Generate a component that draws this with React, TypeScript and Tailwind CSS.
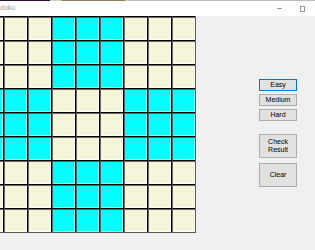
const ROWS = [0, 1, 2, 3, 4, 5, 6, 7, 8];

function Cell({ cyan }: { cyan: boolean }) {
  return (
    <div
      className={
        "h-6 w-6 border-l border-t border-black " +
        (cyan
          ? "bg-[#00ffff] shadow-[inset_1px_1px_0_#4a6a6a,inset_-1px_-1px_0_#7fffff]"
          : "bg-[#f5f5dc] shadow-[inset_1px_1px_0_#6b6b60,inset_-1px_-1px_0_#fdfdf3]")
      }
    />
  );
}

function WinButton({ label, tall, active }: { label: React.ReactNode; tall?: boolean; active?: boolean }) {
  return (
    <button
      className={
        "flex w-[38px] items-center justify-center bg-[#e1e1e1] text-center text-[7px] leading-[8px] text-black " +
        (tall ? "h-6 " : "h-3 ") +
        (active ? "border border-[#0078d7]" : "border border-[#adadad]")
      }
    >
      {label}
    </button>
  );
}

export default function App() {
  return (
    <div className="flex h-[250px] w-[315px] flex-col overflow-hidden bg-[#f0f0f0] font-['Liberation_Sans',Arial,sans-serif]">
      {/* desktop strip behind the window */}
      <div className="flex h-px">
        <div className="w-[50px] bg-[#2e0f30]" />
        <div className="w-[12px] bg-[#d8d0c0]" />
        <div className="w-[63px] bg-[#8c7a60]" />
        <div className="flex-1 bg-[#bdbdbd]" />
      </div>

      {/* title bar */}
      <div className="flex h-[15px] items-center bg-white text-[7px] text-[#9a9a9a]">
        <span className="-mt-px">doku</span>
        <div className="flex-1" />
        <div className="mr-[18px] h-px w-[5px] bg-[#9a9a9a]" />
        <div className="mr-[10px] h-[6px] w-[5px] border border-[#9a9a9a]" />
      </div>

      <div className="flex flex-1">
        <div className="w-[196px] overflow-hidden">
          <div className="-ml-[21px] grid w-[217px] grid-cols-[repeat(9,24px)] border-b border-r border-[#5a5a5a]">
            {ROWS.map((r) =>
              ROWS.map((c) => (
                <Cell key={r * 9 + c} cyan={(Math.floor(r / 3) + Math.floor(c / 3)) % 2 === 1} />
              ))
            )}
          </div>
        </div>

        <div className="ml-[63px] flex flex-col pt-[63px]">
          <WinButton label="Easy" active />
          <div className="mt-[3px]">
            <WinButton label="Medium" />
          </div>
          <div className="mt-[3px]">
            <WinButton label="Hard" />
          </div>
          <div className="mt-[13px]">
            <WinButton
              tall
              label={
                <span>
                  Check
                  <br />
                  Result
                </span>
              }
            />
          </div>
          <div className="mt-[5px]">
            <WinButton tall label="Clear" />
          </div>
        </div>
      </div>
    </div>
  );
}
